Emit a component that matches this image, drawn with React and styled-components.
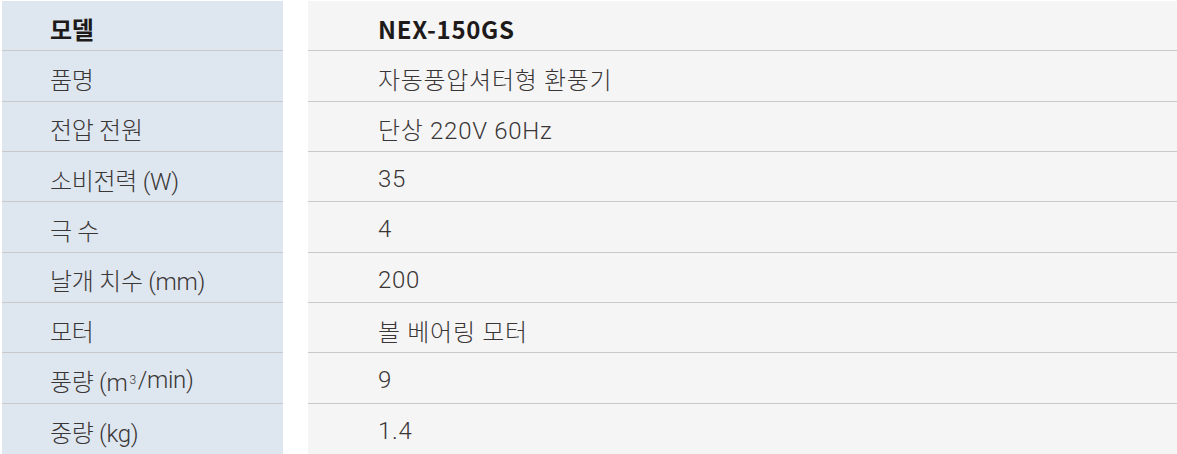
import React from 'react'
import styled, {createGlobalStyle} from 'styled-components'

const GlobalStyle = createGlobalStyle`
  html, body {
    margin: 0;
    padding: 0;
    background: #ffffff;
  }
  body {
    font-family: Roboto, "Noto Sans CJK KR", sans-serif;
  }
`;

const SpecTable = styled.div`
  width: 1177px;
  height: 454px;
  overflow: hidden;
  padding: 1px 0 0 2px;
  box-sizing: border-box;
  display: grid;
  grid-template-columns: 281px 1fr;
  column-gap: 25px;
`;

const Cell = styled.div`
  height: 50.33px;
  box-sizing: border-box;
  display: flex;
  align-items: center;
  padding-left: ${({$label}) => $label ? '48px' : '70px'};
  padding-top: 5px;
  background: ${({$label}) => $label ? '#dee6ef' : '#f5f5f5'};
  border-bottom: ${({$last}) => $last ? 'none' : '1px solid #c9c9c9'};
  font-size: 24px;
  font-family: ${({$head}) => $head ? '"Noto Sans CJK KR", sans-serif' : 'Roboto, "Noto Sans CJK KR", sans-serif'};
  font-weight: ${({$head}) => $head ? 700 : 300};
  color: ${({$head}) => $head ? '#1e1a1a' : '#3a3636'};
  letter-spacing: ${({$label}) => $label ? '-0.3px' : '0.7px'};
  white-space: nowrap;

  sup {
    font-size: 12px;
    vertical-align: 8px;
    line-height: 0;
    margin: 0 2px;
  }
`;

const specs = [
    {label: '모델', value: 'NEX-150GS'},
    {label: '품명', value: '자동풍압셔터형 환풍기'},
    {label: '전압 전원', value: '단상 220V 60Hz'},
    {label: '소비전력 (W)', value: '35'},
    {label: '극 수', value: '4'},
    {label: '날개 치수 (mm)', value: '200'},
    {label: '모터', value: '볼 베어링 모터'},
    {label: <>풍량 (m<sup>3</sup>/min)</>, value: '9'},
    {label: '중량 (kg)', value: '1.4'},
];

const App = () => {
    return (
        <>
            <GlobalStyle/>
            <SpecTable>
                {specs.map((row, index) => (
                    <React.Fragment key={index}>
                        <Cell $label $head={index === 0} $last={index === specs.length - 1}>{row.label}</Cell>
                        <Cell $head={index === 0} $last={index === specs.length - 1}>{row.value}</Cell>
                    </React.Fragment>
                ))}
            </SpecTable>
        </>
    );
};

export default App
